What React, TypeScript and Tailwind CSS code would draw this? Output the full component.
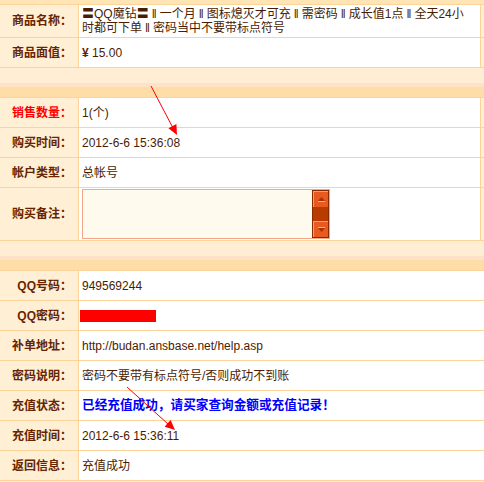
import React from "react";

const Label = ({ children, red }: { children: React.ReactNode; red?: boolean }) => (
  <div
    className={`w-[79px] shrink-0 bg-[#ffefd5] border-r border-[#fcd49a] flex items-center justify-end pr-[6px] text-[12px] font-bold ${
      red ? "text-[#ff0000]" : "text-[#662400]"
    }`}
  >
    {children}
  </div>
);

const Row = ({
  label,
  red,
  children,
  h = "h-[30px]",
  right = true,
}: {
  label: React.ReactNode;
  red?: boolean;
  children: React.ReactNode;
  h?: string;
  right?: boolean;
}) => (
  <div className={`flex ${h} border-b border-[#fcd49a]`}>
    <Label red={red}>{label}</Label>
    <div
      className={`flex-1 bg-white flex items-center pl-[3px] text-[12px] text-[#4a1c00] ${
        right ? "border-r border-[#fcd49a]" : ""
      }`}
    >
      {children}
    </div>
    {right && <div className="w-[3px] bg-[#ffefd5]" />}
  </div>
);

const Band = () => (
  <div className="flex flex-col h-[29px]">
    <div className="h-[15px] bg-[#ffeed3]" />
    <div className="h-[2px] bg-[#ffdfd0]" />
    <div className="h-[2px] bg-[#ffe3bd]" />
    <div className="flex-1 bg-[#ffdda9]" />
  </div>
);

const Bar = () => <span className="inline-block w-[11px] text-center">‖</span>;

export default function App() {
  return (
    <div className="relative w-[484px] h-[482px] overflow-hidden bg-[#ffefd5] [font-family:'Liberation_Sans','Noto_Sans_CJK_SC',sans-serif]">
      <div className="h-[4px] bg-[#ffe4b5]" />
      <div className="border-t border-[#fcd49a]">
        <Row label="商品名称：" h="h-[33px]">
          <div className="leading-[14px]">
            <div className="whitespace-nowrap">
              〓QQ魔钻〓<Bar />一个月<Bar />图标熄灭才可充<Bar />需密码<Bar />成长值1点<Bar />全天24小
            </div>
            <div className="whitespace-nowrap">
              时都可下单<Bar />密码当中不要带标点符号
            </div>
          </div>
        </Row>
        <Row label="商品面值：">
          <span>
            <b className="text-[#662400]">¥</b> 15.00
          </span>
        </Row>
      </div>
      <Band />
      <div className="border-t border-[#fcd49a]">
        <Row label="销售数量：" red>
          1(个)
        </Row>
        <Row label="购买时间：">2012-6-6 15:36:08</Row>
        <Row label="帐户类型：">总帐号</Row>
        <Row label="购买备注：" h="h-[53px]">
          <div className="flex w-[248px] h-[50px] border border-[#f3a68a] bg-[#fffaee]">
            <div className="flex-1" />
            <div className="w-[17px] flex flex-col bg-[#b83c00] border border-[#8a2a00]">
              <div className="h-[16px] bg-[#e85a20] border-t border-l border-[#ff9a66] flex items-center justify-center">
                <svg width="9" height="6" viewBox="0 0 9 6">
                  <path d="M4.5 0 L8 4 L1 4 Z" fill="#a83200" />
                  <rect x="1" y="4" width="7" height="1" fill="#ffb080" />
                </svg>
              </div>
              <div className="flex-1" />
              <div className="h-[16px] bg-[#e85a20] border-t border-l border-[#ff9a66] flex items-center justify-center">
                <svg width="9" height="6" viewBox="0 0 9 6">
                  <rect x="1" y="0" width="7" height="1" fill="#ffb080" />
                  <path d="M1 1 L8 1 L4.5 5 Z" fill="#a83200" />
                </svg>
              </div>
            </div>
          </div>
        </Row>
      </div>
      <Band />
      <div className="border-t border-[#fcd49a]">
        <Row label="QQ号码：" right={false}>949569244</Row>
        <Row label="QQ密码：" right={false}>
          <div className="w-[76px] h-[12px] bg-[#ff0000] -ml-[2px] mt-[1px]" />
        </Row>
        <Row label="补单地址：" right={false}>http://budan.ansbase.net/help.asp</Row>
        <Row label="密码说明：" right={false}>密码不要带有标点符号/否则成功不到账</Row>
        <Row label="充值状态：" right={false}>
          <span className="font-bold text-[#0000ff] text-[12.65px]">已经充值成功，请买家查询金额或充值记录！</span>
        </Row>
        <Row label="充值时间：" right={false}>2012-6-6 15:36:11</Row>
        <Row label="返回信息：" right={false}>充值成功</Row>
      </div>

      <svg className="absolute inset-0 pointer-events-none" width="484" height="482" viewBox="0 0 484 482">
        <line x1="151" y1="86" x2="173" y2="128" stroke="#ff0000" strokeWidth="1" />
        <path d="M177 135 L168.4 128.2 L176.4 124 Z" fill="#ff0000" />
        <line x1="127" y1="387" x2="168" y2="424" stroke="#ff0000" strokeWidth="1" />
        <path d="M175 430 L164.6 426.7 L170.6 420 Z" fill="#ff0000" />
      </svg>
    </div>
  );
}
